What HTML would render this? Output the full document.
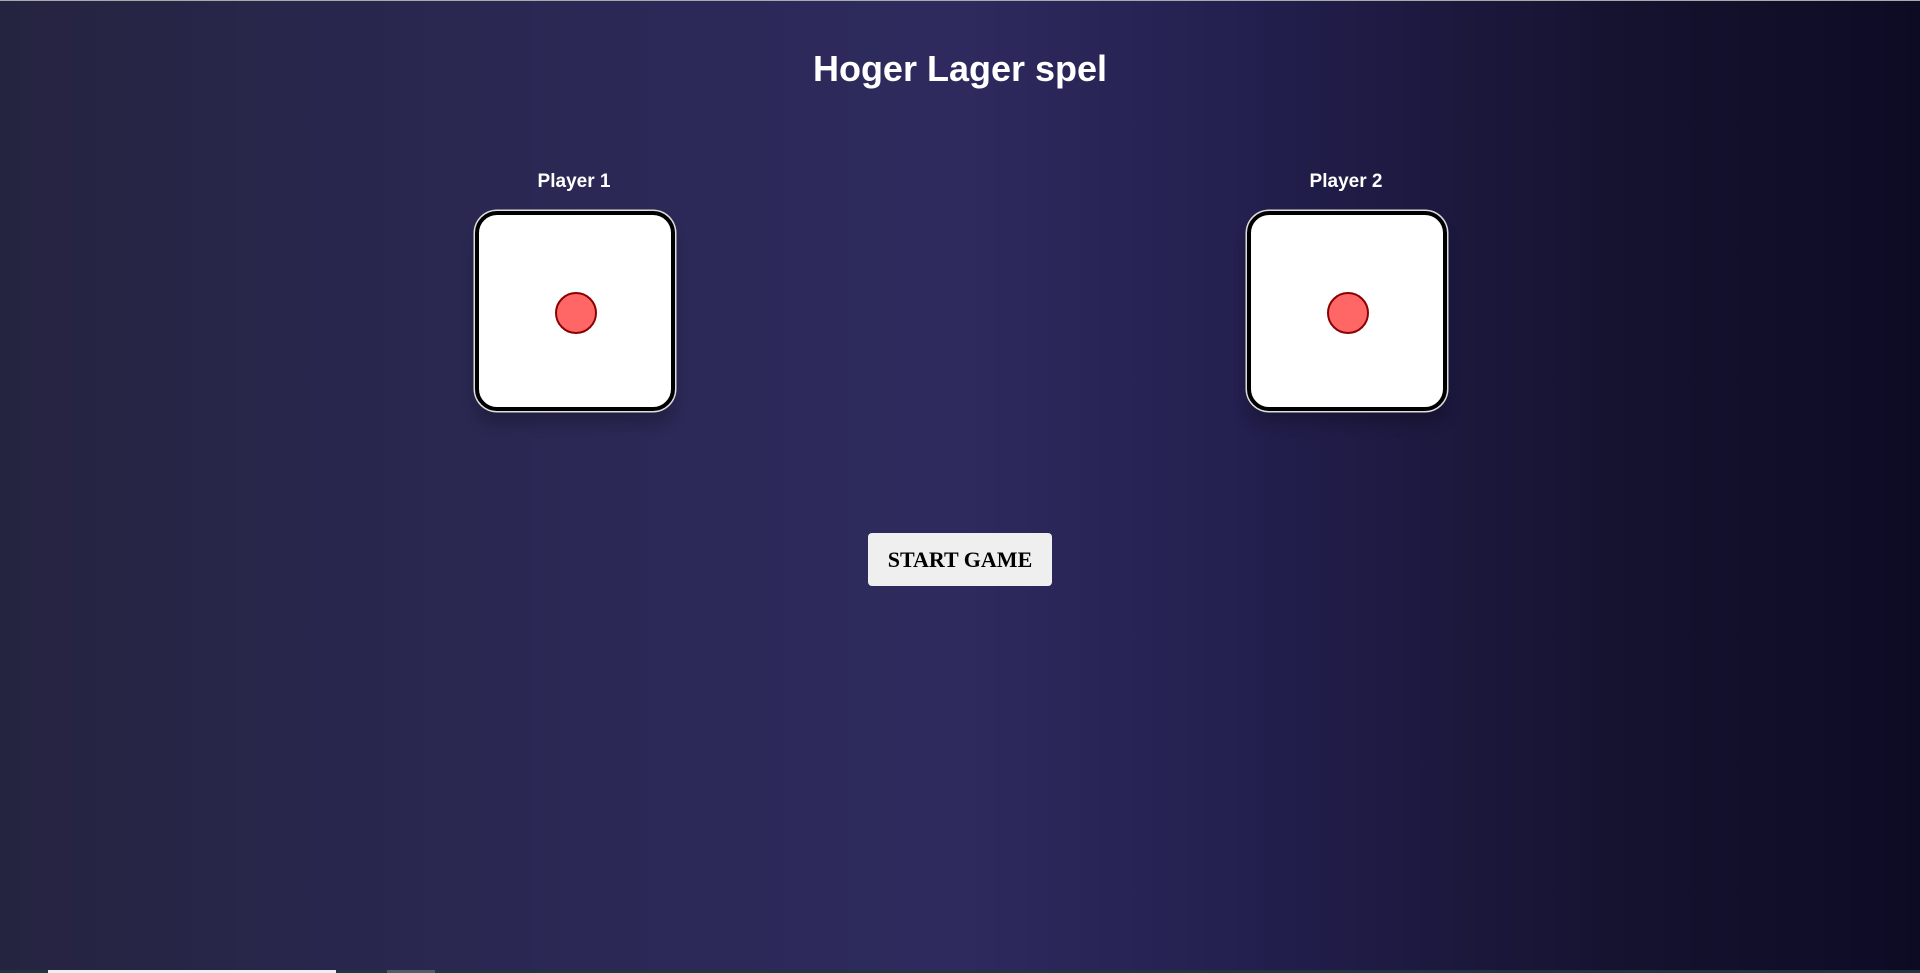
<!DOCTYPE html>
<html><head><meta charset="utf-8"><style>
html,body{margin:0;padding:0}
body{width:1920px;height:973px;overflow:hidden;position:relative;font-family:"Liberation Sans",sans-serif;
background:linear-gradient(90deg,#252440 0%,#2b2855 30%,#2e2a5e 50%,#231f4e 65%,#15122f 85%,#0d0b24 100%);}
.top{position:absolute;left:0;top:0;width:1920px;height:1px;background:#aaa}
h1{position:absolute;left:0;width:1920px;top:47px;margin:0;text-align:center;color:#fff;font-size:36px;font-weight:bold;line-height:44px}
.lbl{position:absolute;width:200px;text-align:center;color:#fff;font-weight:bold;font-size:19px;top:171px}
.die{position:absolute;top:211px;width:192px;height:192px;background:#fff;border:4px solid #000;border-radius:22px;box-shadow:0 0 0 1.5px #ddd,0 14px 14px rgba(0,0,0,.2)}
.dot{position:absolute;left:76px;top:77px;width:38px;height:38px;border-radius:50%;background:#ff6666;border:2px solid #8b0000}
.btn{position:absolute;left:868px;top:533px;width:184px;height:53px;background:#efefef;border-radius:4px;text-align:center;line-height:53px;font-family:"Liberation Serif",serif;font-weight:bold;font-size:22px;color:#000}
.bar{position:absolute;left:0;top:970px;width:1920px;height:3px;background:#1e3640}
</style></head><body>
<div class="top"></div>
<h1>Hoger Lager spel</h1>
<div class="lbl" style="left:474px">Player 1</div>
<div class="die" style="left:475px"><div class="dot"></div></div>
<div class="lbl" style="left:1246px">Player 2</div>
<div class="die" style="left:1247px"><div class="dot"></div></div>
<div class="btn">START GAME</div>
<div class="bar"><div style="position:absolute;left:48px;top:0;width:288px;height:3px;background:#eee"></div><div style="position:absolute;left:387px;top:0;width:48px;height:3px;background:#4e5e68"></div></div>
</body></html>
